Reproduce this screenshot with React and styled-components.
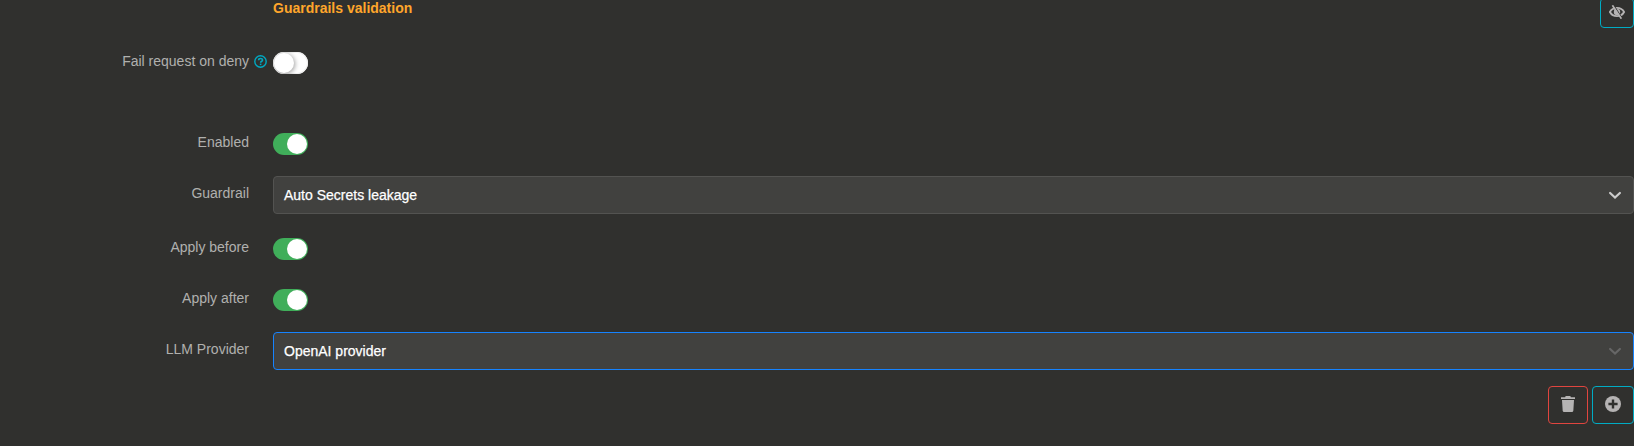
import React, { useState } from "react";
import styled, { createGlobalStyle } from "styled-components";

const GlobalStyle = createGlobalStyle`
  * { box-sizing: border-box; }
  body {
    margin: 0;
    background: #30302e;
    font-family: "Liberation Sans", Helvetica, Arial, sans-serif;
    font-size: 14px;
    line-height: 20px;
    overflow: hidden;
  }
`;

const Page = styled.main`
  height: 446px;
  display: flex;
  flex-direction: column;
  overflow: hidden;
  color: #b0b0ae;
`;

const Header = styled.header`
  height: 28px;
  flex: none;
  padding-left: 273px;
  display: flex;
  justify-content: space-between;
  align-items: flex-end;
`;

const Title = styled.h3`
  margin: -2px 0 0;
  align-self: flex-start;
  font-size: 14px;
  line-height: 20px;
  color: #ffa62b;
`;

const Row = styled.div`
  flex: none;
  display: flex;
  align-items: flex-start;
  height: ${(p) => p.$height}px;
  margin-top: ${(p) => p.$gap || 0}px;
`;

const Label = styled.label`
  width: 273px;
  flex: none;
  padding-right: ${(p) => (p.$help ? 6 : 24)}px;
  margin-top: ${(p) => p.$offset || 0}px;
  display: flex;
  justify-content: flex-end;
  align-items: center;
  gap: 5px;
  white-space: nowrap;
`;

const Switch = styled.button`
  width: 35px;
  height: 22px;
  padding: 1px;
  border: 0;
  border-radius: 11px;
  display: flex;
  align-items: center;
  justify-content: ${(p) => (p.$on ? "flex-end" : "flex-start")};
  background: ${(p) => (p.$on ? "#40ae5a" : "#fff")};
  box-shadow: ${(p) => (p.$on ? "none" : "inset 0 0 0 1px #eee")};
  overflow: hidden;
`;

const Knob = styled.span`
  width: 20px;
  height: 20px;
  border-radius: 50%;
  background: #fff;
  box-shadow: ${(p) => (p.$on ? "none" : "1px 1px 5px rgba(0,0,0,0.4)")};
`;

const Select = styled.div`
  flex: 1;
  height: 38px;
  padding: 0 11px 0 10px;
  display: flex;
  align-items: center;
  justify-content: space-between;
  border: 1px solid ${(p) => (p.$focused ? "#1683ff" : "#535351")};
  border-radius: 4px;
  background: #41413f;
  color: #fff;
  -webkit-text-stroke: 0.25px #fff;
`;

const Chevron = styled.svg`
  width: 14px;
  height: 14px;
  color: ${(p) => (p.$dim ? "#666" : "#ccc")};
`;

const Actions = styled.footer`
  flex: none;
  margin-top: 16px;
  display: flex;
  justify-content: flex-end;
  gap: 4px;
`;

const IconButton = styled.button`
  width: ${(p) => p.$width}px;
  height: ${(p) => p.$height || 38}px;
  padding: 0 0 2px;
  flex: none;
  display: flex;
  align-items: center;
  justify-content: center;
  border: 1px solid ${(p) => (p.$danger ? "#e0453f" : "#00acc4")};
  border-radius: 4px;
  background: transparent;
  color: #b5b3b3;
`;

const HelpIcon = () => (
  <svg width="13" height="13" viewBox="0 0 13 13" fill="none" stroke="#00a9c2">
    <circle cx="6.5" cy="6.5" r="5.7" strokeWidth="1.4" />
    <path d="M4.6 5.2C4.7 3 8.6 3 8.5 5.2C8.4 6.4 6.6 6.2 6.6 7.7" strokeWidth="1.6" />
    <path d="M6.6 8.6V10.1" strokeWidth="1.6" />
  </svg>
);

const EyeOffIcon = () => (
  <svg width="16" height="14" viewBox="0 0 16 14" fill="none" stroke="currentColor">
    <path d="M.9 7C3.9 1.5 12.1 1.5 15.1 7C12.1 12.5 3.9 12.5 .9 7Z" strokeWidth="1.9" />
    <circle cx="8" cy="7" r="3.2" fill="currentColor" stroke="none" />
    <path d="M4.6 .2L13 13" stroke="#30302e" strokeWidth="1.2" />
    <path d="M3.4 .3L12.4 13.7" strokeWidth="1.7" />
  </svg>
);

const TrashIcon = () => (
  <svg width="14" height="16" viewBox="0 0 14 16" fill="currentColor">
    <path d="M0 1.2H4.1L4.7 0H9.3L9.9 1.2H14V3H0Z" />
    <path d="M1 4H13L12.3 14.7Q12.2 16 10.9 16H3.1Q1.8 16 1.7 14.7Z" />
  </svg>
);

const PlusIcon = () => (
  <svg width="16" height="16" viewBox="0 0 16 16">
    <circle cx="8" cy="8" r="8" fill="currentColor" />
    <path d="M8 3.4V12.6M3.4 8H12.6" stroke="#30302e" strokeWidth="2.4" />
  </svg>
);

function Toggle({ initial, label }) {
  const [on, setOn] = useState(initial);
  return (
    <Switch type="button" role="switch" aria-checked={on} aria-label={label} $on={on} onClick={() => setOn(!on)}>
      <Knob $on={on} />
    </Switch>
  );
}

function Dropdown({ value, focused }) {
  return (
    <Select role="combobox" aria-expanded="false" $focused={focused}>
      <span>{value}</span>
      <Chevron $dim={focused} viewBox="0 0 14 14" fill="none" stroke="currentColor" strokeWidth="2.2" strokeLinecap="round">
        <path d="M2.1 5L7 9.5L11.9 5" />
      </Chevron>
    </Select>
  );
}

export default function App() {
  return (
    <>
      <GlobalStyle />
      <Page>
        <Header>
          <Title>Guardrails validation</Title>
          <IconButton $width={34} $height={30} aria-label="Hide"><EyeOffIcon /></IconButton>
        </Header>
        <Row $gap={24} $height={22}>
          <Label $help $offset={-1}>Fail request on deny <HelpIcon /></Label>
          <Toggle initial={false} label="Fail request on deny" />
        </Row>
        <Row $gap={59} $height={22}>
          <Label $offset={-1}>Enabled</Label>
          <Toggle initial label="Enabled" />
        </Row>
        <Row $gap={21} $height={38}>
          <Label $offset={7}>Guardrail</Label>
          <Dropdown value="Auto Secrets leakage" />
        </Row>
        <Row $gap={24} $height={22}>
          <Label $offset={-1}>Apply before</Label>
          <Toggle initial label="Apply before" />
        </Row>
        <Row $gap={29} $height={22}>
          <Label $offset={-1}>Apply after</Label>
          <Toggle initial label="Apply after" />
        </Row>
        <Row $gap={21} $height={38}>
          <Label $offset={7}>LLM Provider</Label>
          <Dropdown value="OpenAI provider" focused />
        </Row>
        <Actions>
          <IconButton $danger $width={40} aria-label="Delete"><TrashIcon /></IconButton>
          <IconButton $width={42} aria-label="Add"><PlusIcon /></IconButton>
        </Actions>
      </Page>
    </>
  );
}
